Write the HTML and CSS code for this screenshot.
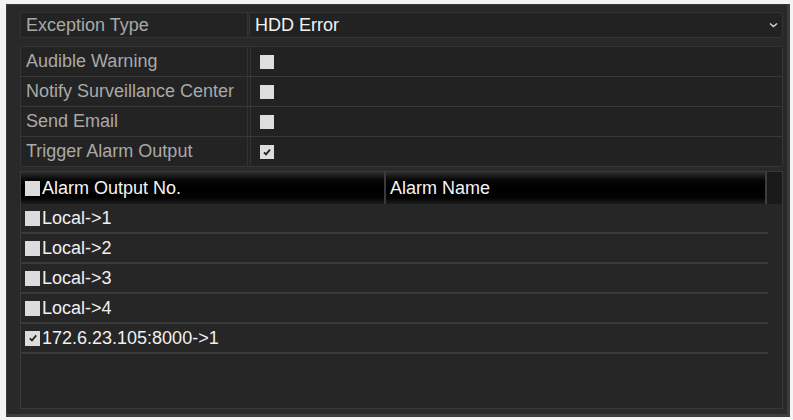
FILE: index.html
```html
<!DOCTYPE html>
<html>
<head>
<meta charset="utf-8">
<link rel="stylesheet" href="styles.css">
</head>
<body>
<div class="panel">
  <div class="select-row">
    <div class="cell label">Exception Type</div>
    <div class="cell value select">
      <span>HDD Error</span>
      <svg class="chev" width="9" height="6" viewBox="0 0 9 6"><path d="M1 1.5 L4.5 4.5 L8 1.5" fill="none" stroke="#cfcfcf" stroke-width="1.6"/></svg>
    </div>
  </div>
  <div class="group">
    <div class="grow">
      <div class="cell label">Audible Warning</div>
      <div class="cell value"><span class="cb"></span></div>
    </div>
    <div class="grow">
      <div class="cell label">Notify Surveillance Center</div>
      <div class="cell value"><span class="cb"></span></div>
    </div>
    <div class="grow">
      <div class="cell label">Send Email</div>
      <div class="cell value"><span class="cb"></span></div>
    </div>
    <div class="grow">
      <div class="cell label">Trigger Alarm Output</div>
      <div class="cell value"><span class="cb checked"><svg width="10" height="10" viewBox="0 0 10 10"><path d="M2 5.3 L4 7.4 L8 2.6" fill="none" stroke="#222" stroke-width="1.8"/></svg></span></div>
    </div>
  </div>
  <div class="table">
    <div class="thead">
      <div class="th c1"><span class="tcb"></span>Alarm Output No.</div>
      <div class="th c2">Alarm Name</div>
      <div class="th c3"></div>
    </div>
    <div class="tbody">
      <div class="tr"><span class="tcb"></span>Local-&gt;1</div>
      <div class="tr"><span class="tcb"></span>Local-&gt;2</div>
      <div class="tr"><span class="tcb"></span>Local-&gt;3</div>
      <div class="tr"><span class="tcb"></span>Local-&gt;4</div>
      <div class="tr"><span class="tcb checked"><svg width="10" height="10" viewBox="0 0 10 10"><path d="M1.8 5.3 L4 7.5 L8.2 2.4" fill="none" stroke="#222" stroke-width="1.8"/></svg></span>172.6.23.105:8000-&gt;1</div>
    </div>
  </div>
</div>
</body>
</html>
```

FILE: styles.css
```css
html, body {
  margin: 0;
  padding: 0;
  background: #f3f3f3;
}
body {
  width: 793px;
  height: 420px;
  overflow: hidden;
  font-family: "Liberation Sans", Arial, sans-serif;
  font-size: 18px;
}
.panel {
  box-sizing: border-box;
  margin: 4px 0 0 6px;
  width: 784px;
  height: 413px;
  background: #292929;
  border: 1px solid #3a3a3a;
  border-right: 3px solid #3c3c3c;
  border-bottom: 3px solid #3c3c3c;
  padding: 7px 4px 5px 13px;
  display: flex;
  flex-direction: column;
}
.select-row {
  display: grid;
  grid-template-columns: 228px 1fr;
  column-gap: 1px;
  height: 26px;
}
.cell {
  display: flex;
  align-items: center;
  box-sizing: border-box;
}
.label {
  color: #a9a9a9;
  padding-left: 5px;
  background: #232323;
  border: 1px solid #333;
}
.value {
  background: #222;
  border: 1px solid #353535;
  padding-left: 9px;
  color: #f2f2f2;
}
.select {
  padding-left: 5px;
  border-radius: 0 4px 4px 0;
  justify-content: space-between;
  padding-right: 4px;
}
.chev {
  display: block;
}
.group {
  margin-top: 8px;
  border: 1px solid #353535;
  border-radius: 0 3px 3px 0;
  background: #232323;
  display: flex;
  flex-direction: column;
}
.grow {
  display: grid;
  grid-template-columns: 227px 1fr;
  column-gap: 2px;
  height: 30px;
  border-top: 1px solid #383838;
  box-sizing: border-box;
}
.grow:first-child {
  border-top: none;
  height: 29px;
}
.grow .label,
.grow .value {
  border: none;
}
.grow .label {
  border-right: 1px solid #333;
}
.grow .value {
  border-left: 1px solid #333;
}
.cb {
  width: 14px;
  height: 14px;
  background: #dedede;
  display: flex;
  align-items: center;
  justify-content: center;
  margin-top: 1px;
}
.table {
  margin-top: 4px;
  flex: 1;
  border: 1px solid #3a3a3a;
  background: #262626;
  display: flex;
  flex-direction: column;
}
.thead {
  display: grid;
  grid-template-columns: 365px 381px 1fr;
  height: 32px;
  background: linear-gradient(#2e2e2e 0%, #060606 25%, #000 50%, #020202 80%, #1c1c1c 100%);
}
.th {
  display: flex;
  align-items: center;
  color: #f4f4f4;
  box-sizing: border-box;
}
.c1 {
  padding-left: 4px;
  border-right: 2px solid #3a3a3a;
}
.c2 {
  padding-left: 4px;
  border-right: 2px solid #3d3d3d;
}
.c3 {
  background: #1a1a1a;
}
.tbody {
  display: flex;
  flex-direction: column;
  margin-right: 14px;
}
.tr {
  height: 30px;
  box-sizing: border-box;
  border-bottom: 2px solid #3a3a3a;
  display: flex;
  align-items: center;
  padding-left: 4px;
  color: #f0f0f0;
}
.tcb {
  width: 15px;
  height: 15px;
  background: #dcdcdc;
  margin-right: 2px;
  display: flex;
  align-items: center;
  justify-content: center;
}
```
